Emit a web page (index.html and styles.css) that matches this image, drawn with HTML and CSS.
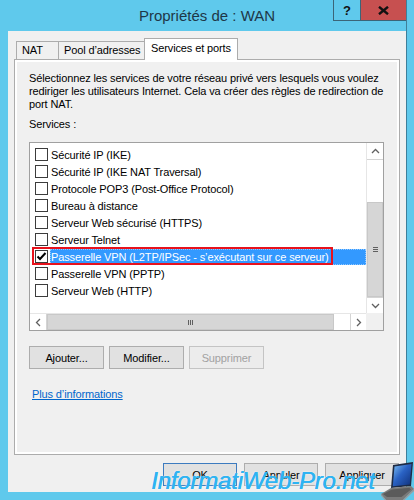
FILE: index.html
```html
<!DOCTYPE html>
<html lang="fr">
<head>
<meta charset="utf-8">
<title>Propriétés de : WAN</title>
<link rel="stylesheet" href="styles.css">
</head>
<body>
<div class="screen">
  <div class="frame">
    <header class="titlebar">
      <h1 class="title">Propriétés de : WAN</h1>
      <div class="controls">
        <span class="help">?</span>
        <span class="close">
          <svg width="11" height="9" viewBox="0 0 11 9"><path d="M1 0.8 L10 8.2 M10 0.8 L1 8.2" stroke="#111" stroke-width="2.4" fill="none"/></svg>
        </span>
      </div>
    </header>
    <main class="client">
      <nav class="tabs">
        <div class="tab tab-nat">NAT</div>
        <div class="tab tab-pool">Pool d’adresses</div>
        <div class="tab tab-active">Services et ports</div>
      </nav>
      <section class="panel">
        <div class="page">
          <p class="intro">Sélectionnez les services de votre réseau privé vers lesquels vous voulez<br>rediriger les utilisateurs Internet. Cela va créer des règles de redirection de<br>port NAT.</p>
          <div class="label">Services :</div>
          <div class="listbox">
            <ul class="items">
              <li class="item"><span class="check"></span><span class="item-label">Sécurité IP (IKE)</span></li>
              <li class="item"><span class="check"></span><span class="item-label">Sécurité IP (IKE NAT Traversal)</span></li>
              <li class="item"><span class="check"></span><span class="item-label">Protocole POP3 (Post-Office Protocol)</span></li>
              <li class="item"><span class="check"></span><span class="item-label">Bureau à distance</span></li>
              <li class="item"><span class="check"></span><span class="item-label">Serveur Web sécurisé (HTTPS)</span></li>
              <li class="item"><span class="check"></span><span class="item-label">Serveur Telnet</span></li>
              <li class="item selected"><span class="check"><svg width="11" height="11" viewBox="0 0 11 11"><path d="M1.5 5.5 L4 8 L9.5 2" stroke="#000" stroke-width="2" fill="none"/></svg></span><span class="item-label">Passerelle VPN (L2TP/IPSec - s’exécutant sur ce serveur)</span><span class="mark"></span></li>
              <li class="item"><span class="check"></span><span class="item-label">Passerelle VPN (PPTP)</span></li>
              <li class="item"><span class="check"></span><span class="item-label">Serveur Web (HTTP)</span></li>
            </ul>
            <div class="vscroll">
              <div class="sb-btn sb-up"><svg width="9" height="6" viewBox="0 0 9 6"><path d="M1 5 L4.5 1.5 L8 5" stroke="#606060" stroke-width="1.3" fill="none"/></svg></div>
              <div class="v-track"></div>
              <div class="v-thumb"><svg width="7" height="7" viewBox="0 0 7 7"><path d="M1 1.5 H6 M1 3.5 H6 M1 5.5 H6" stroke="#606060" stroke-width="1"/></svg></div>
              <div class="sb-btn sb-down"><svg width="9" height="6" viewBox="0 0 9 6"><path d="M1 1 L4.5 4.5 L8 1" stroke="#606060" stroke-width="1.3" fill="none"/></svg></div>
            </div>
            <div class="hscroll">
              <div class="sb-btn sb-left"><svg width="6" height="9" viewBox="0 0 6 9"><path d="M5 1 L1.5 4.5 L5 8" stroke="#606060" stroke-width="1.3" fill="none"/></svg></div>
              <div class="h-thumb"><svg width="7" height="7" viewBox="0 0 7 7"><path d="M1.5 1 V6 M3.5 1 V6 M5.5 1 V6" stroke="#606060" stroke-width="1"/></svg></div>
              <div class="h-track"></div>
              <div class="sb-btn sb-right"><svg width="6" height="9" viewBox="0 0 6 9"><path d="M1 1 L4.5 4.5 L1 8" stroke="#606060" stroke-width="1.3" fill="none"/></svg></div>
            </div>
            <div class="corner"></div>
          </div>
          <div class="actions">
            <button class="btn">Ajouter...</button>
            <button class="btn">Modifier...</button>
            <button class="btn btn-disabled">Supprimer</button>
          </div>
          <a class="more" href="#">Plus d’informations</a>
        </div>
      </section>
      <footer class="dialog-buttons">
        <button class="btn btn-dlg btn-default">OK</button>
        <button class="btn btn-dlg">Annuler</button>
        <button class="btn btn-dlg">Appliquer</button>
      </footer>
    </main>
  </div>
  <div class="watermark">InformatiWeb-Pro.net</div>
  <svg class="laptop" width="34" height="42" viewBox="0 0 34 42">
    <defs>
      <linearGradient id="scr" x1="0" y1="0" x2="1" y2="1">
        <stop offset="0" stop-color="#7fc2f5"/>
        <stop offset="0.45" stop-color="#2a62c4"/>
        <stop offset="1" stop-color="#0f2f78"/>
      </linearGradient>
    </defs>
    <path d="M13 6 L33 3 L31 27 L11 29 Z" fill="#1d2b45"/>
    <path d="M14.5 7.5 L31.5 5 L29.8 25.5 L12.8 27.3 Z" fill="url(#scr)"/>
    <path d="M1 35 L11 29 L31 27 L34 30 L23 41 L6 41 Z" fill="#7a7a7a"/>
    <path d="M3 35 L12 30.5 L29.5 28.8 L31 30.5 L21.5 38 L7 38 Z" fill="#5b5b5b"/>
    <path d="M1 35 L6 41 L23 41 L34 30 L34 32 L23.5 42 L5.5 42 L1 36.5 Z" fill="#9b9b9b"/>
  </svg>
</div>
</body>
</html>
```
FILE: styles.css
```css
* { box-sizing: border-box; }
html, body { margin: 0; padding: 0; }
body {
  width: 414px;
  height: 500px;
  overflow: hidden;
  background: #5fc9ec;
  font-family: "Liberation Sans", Arial, sans-serif;
  font-size: 11px;
  letter-spacing: -0.12px;
  color: #000;
}
.screen { position: relative; width: 414px; height: 500px; }

.frame {
  margin-left: 8px;
  width: 399px;
  height: 492px;
  border-right: 1px solid #3f7f9a;
  display: flex;
  flex-direction: column;
}

/* title bar */
.titlebar {
  flex: none;
  height: 31px;
  display: grid;
  grid-template-columns: 1fr auto 1fr;
  align-items: center;
}
.title {
  grid-column: 2;
  margin: 0;
  font-size: 15px;
  letter-spacing: 0;
  font-weight: normal;
  line-height: 18px;
  color: #1e3747;
  white-space: nowrap;
}
.controls {
  grid-column: 3;
  justify-self: end;
  align-self: start;
  display: flex;
  height: 21px;
}
.help {
  width: 28px;
  height: 21px;
  border: 1px solid #3b6578;
  border-top: none;
  display: flex;
  align-items: center;
  justify-content: center;
  font-weight: bold;
  font-size: 13px;
  color: #111;
}
.close {
  width: 45px;
  height: 21px;
  background: #c75050;
  border-bottom: 1px solid #3b6578;
  display: flex;
  align-items: center;
  justify-content: center;
}

/* client area */
.client {
  flex: 1;
  background: #f0f0f0;
  display: flex;
  flex-direction: column;
  padding-top: 7px;
}
.tabs {
  display: flex;
  align-items: flex-end;
  height: 22px;
  margin: 0 0 -1px 8px;
  position: relative;
  z-index: 1;
}
.tab {
  height: 18px;
  margin-bottom: 1px;
  border: 1px solid #acacac;
  border-bottom: none;
  background: #f0f0f0;
  padding-left: 5px;
  line-height: 17px;
  white-space: nowrap;
}
.tab + .tab { margin-left: -1px; }
.tab-nat { width: 43px; }
.tab-pool { width: 87px; }
.tab-active {
  width: 94px;
  height: 22px;
  margin-bottom: 0;
  background: #fff;
  line-height: 18px;
  padding-left: 6px;
}

.panel {
  flex: none;
  height: 396px;
  margin: 0 6px;
  border: 1px solid #acacac;
  background: #fff;
  padding: 2px;
}
.page {
  height: 100%;
  background: #f0f0f0;
  padding: 10px 0 0 12px;
}
.intro {
  margin: 0;
  line-height: 13px;
  white-space: nowrap;
}
.label { margin-top: 7px; line-height: 13px; }

/* list box */
.listbox {
  margin-top: 11px;
  width: 355px;
  height: 189px;
  border: 1px solid #a0a0a0;
  background: #fff;
  display: grid;
  grid-template-columns: 336px 17px;
  grid-template-rows: 170px 17px;
}
.items {
  list-style: none;
  margin: 0;
  padding: 3px 0 0;
  overflow: hidden;
}
.item {
  position: relative;
  height: 17px;
  display: flex;
  align-items: center;
  padding-left: 5px;
  white-space: nowrap;
}
.check {
  flex: none;
  width: 13px;
  height: 13px;
  border: 1px solid #3c3c3c;
  background: #fff;
  display: flex;
  align-items: center;
  justify-content: center;
}
.item-label {
  margin-left: 2px;
  padding-left: 1px;
  height: 16px;
  line-height: 16px;
}
.selected .item-label {
  flex: 1;
  background: #3399ff;
  color: #fff;
  outline: 1px dotted rgba(255, 255, 255, 0.45);
  outline-offset: -1px;
}
.mark {
  position: absolute;
  left: 2px;
  top: -1px;
  width: 301px;
  height: 18px;
  border: 2px solid #e8121c;
}

.vscroll {
  display: flex;
  flex-direction: column;
  border-left: 1px solid #e6e6e6;
}
.sb-btn {
  flex: none;
  display: flex;
  align-items: center;
  justify-content: center;
  background: #fff;
}
.sb-up { height: 17px; border-bottom: 1px solid #d4d4d4; }
.v-track { height: 42px; }
.v-thumb {
  flex: none;
  height: 95px;
  background: #d6d6d6;
  border: 1px solid #c8c8c8;
  display: flex;
  align-items: center;
  justify-content: center;
}
.sb-down { height: 16px; border-top: 1px solid #d4d4d4; }

.hscroll {
  display: flex;
  border-top: 1px solid #e6e6e6;
}
.sb-left { width: 17px; border-right: 1px solid #d4d4d4; }
.h-thumb {
  flex: none;
  width: 287px;
  background: #d6d6d6;
  border: 1px solid #c8c8c8;
  display: flex;
  align-items: center;
  justify-content: center;
}
.h-track { width: 16px; }
.sb-right { width: 16px; border-left: 1px solid #d4d4d4; }
.corner { background: #f0f0f0; }

/* buttons */
.btn {
  width: 75px;
  height: 23px;
  padding: 0;
  border: 1px solid #adadad;
  background: #e1e1e1;
  font: inherit;
  letter-spacing: inherit;
  color: #000;
  display: flex;
  align-items: center;
  justify-content: center;
}
.btn-disabled {
  background: #ececec;
  border-color: #c4c4c4;
  color: #a2a2a2;
}
.actions {
  display: flex;
  gap: 5px;
  margin-top: 15px;
}
.more {
  display: inline-block;
  margin: 19px 0 0 3px;
  line-height: 13px;
  color: #0066cc;
  text-decoration: underline;
}
.dialog-buttons {
  display: flex;
  justify-content: flex-end;
  gap: 7px;
  padding: 8px 7px 0 0;
}
.btn-dlg { width: 74px; }
.btn-default { border-color: #3d7bbf; }

/* overlays */
.watermark {
  position: absolute;
  left: 151px;
  top: 469px;
  font-size: 24px;
  line-height: 24px;
  letter-spacing: -0.2px;
  font-style: italic;
  color: #2eb3f2;
  white-space: nowrap;
  text-shadow: 0.5px 0 0 #2eb3f2, 0 0 2px rgba(255, 255, 255, 0.9);
}
.laptop {
  position: absolute;
  left: 380px;
  top: 459px;
}
```
